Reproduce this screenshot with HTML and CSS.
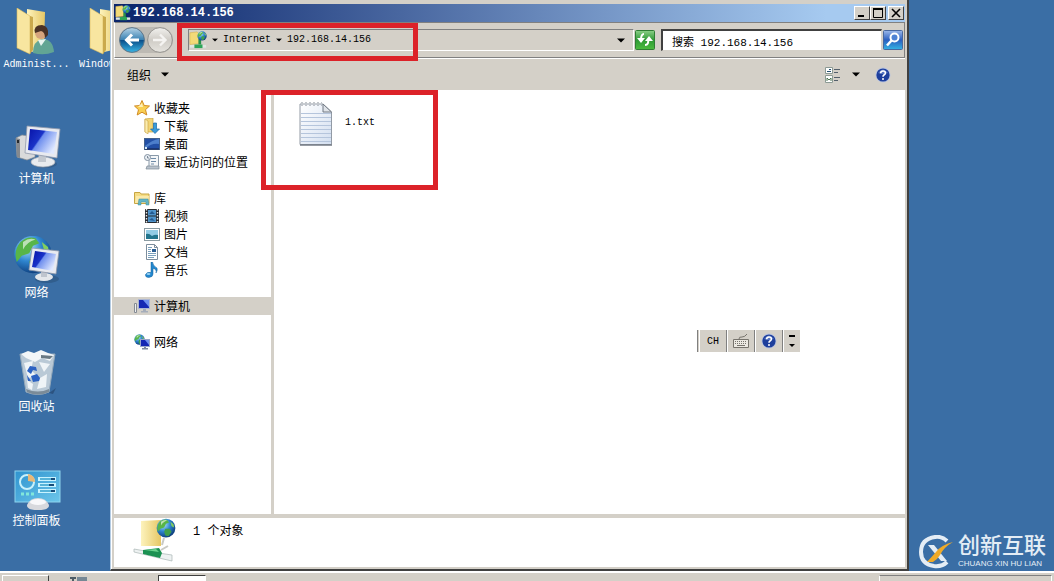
FILE: index.html
```html
<!DOCTYPE html>
<html lang="zh-CN">
  <head>
    <meta charset="UTF-8" />
    <title>192.168.14.156</title>
    <link rel="stylesheet" href="styles.css">
  </head>
  <body>
    <!-- Shared icons -->
    <svg class="sprite" width="0" height="0" aria-hidden="true">
      <defs>
        <linearGradient id="gFolder" x1="0" x2="1">
          <stop offset="0" stop-color="#fdf3bd" />
          <stop offset="1" stop-color="#e6c765" />
        </linearGradient>
        <linearGradient id="gScreen" x1="0" x2="1" y2="0.6">
          <stop offset="0" stop-color="#0712a8" />
          <stop offset="0.45" stop-color="#1a33c8" />
          <stop offset="0.5" stop-color="#6f8fee" />
          <stop offset="1" stop-color="#dfe8ff" />
        </linearGradient>
        <radialGradient id="gGlobe" cx="0.35" cy="0.3" r="0.75">
          <stop offset="0" stop-color="#b8ecff" />
          <stop offset="0.5" stop-color="#2f86d0" />
          <stop offset="1" stop-color="#0c3a78" />
        </radialGradient>
        <linearGradient id="gBack" x2="0" y2="1">
          <stop offset="0" stop-color="#b5d3e6" />
          <stop offset="0.48" stop-color="#3d84b4" />
          <stop offset="0.52" stop-color="#0b4f8a" />
          <stop offset="1" stop-color="#38b6e6" />
        </linearGradient>
        <linearGradient id="gForward" x2="0" y2="1">
          <stop offset="0" stop-color="#f2f1ee" />
          <stop offset="0.5" stop-color="#cfccc6" />
          <stop offset="1" stop-color="#e6e4df" />
        </linearGradient>
        <linearGradient id="gSearch" x2="0" y2="1">
          <stop offset="0" stop-color="#9db9ea" />
          <stop offset="0.5" stop-color="#2a5fc0" />
          <stop offset="1" stop-color="#35b4e4" />
        </linearGradient>
        <linearGradient id="gGreen" x2="0" y2="1">
          <stop offset="0" stop-color="#8ccf88" />
          <stop offset="0.5" stop-color="#2e9a35" />
          <stop offset="1" stop-color="#4cbc3e" />
        </linearGradient>
        <linearGradient id="gPanel" x2="1" y2="1">
          <stop offset="0" stop-color="#2f93cf" />
          <stop offset="1" stop-color="#6cc6ea" />
        </linearGradient>
        <linearGradient id="gPaper" x2="1" y2="1">
          <stop offset="0" stop-color="#ffffff" />
          <stop offset="1" stop-color="#d3dff0" />
        </linearGradient>
      </defs>

      <symbol id="folder" viewBox="0 0 48 48">
        <path d="M14 1 L32 4 L31 41 L14 45Z" fill="url(#gFolder)" />
        <path d="M4 0 L17 8 L17 46 L4 40Z" fill="#f8e6a0" stroke="#d9b95c" stroke-width="0.6" />
        <path d="M17 8 L20 9 L20 42 L17 46Z" fill="#caa94c" />
      </symbol>

      <symbol id="monitor" viewBox="0 0 48 48">
        <path d="M3 16 L9 13 L22 15 L22 35 L14 38 L4 35Z" fill="#d9dadb" stroke="#8b8f94" stroke-width="0.7" />
        <path d="M3 16 L7 17 L7 36 L4 35Z" fill="#85898e" />
        <path d="M4 18 H6 V21 H4Z" fill="#26292d" />
        <ellipse cx="32" cy="42" rx="12" ry="4" fill="#31557f" opacity="0.6" />
        <ellipse cx="30" cy="40" rx="12" ry="5" fill="#e9ebee" stroke="#a5abb3" stroke-width="0.7" />
        <path d="M26 31 L33 32 L33 40 L25 40Z" fill="#c3c8cf" />
        <path d="M14 4 L47 7 L44 36 L12 31Z" fill="#e8eaf0" stroke="#9099ab" stroke-width="0.8" />
        <path d="M17 7 L44 10 L41 32 L15 28Z" fill="url(#gScreen)" />
      </symbol>

      <symbol id="globe" viewBox="0 0 32 32">
        <circle cx="16" cy="16" r="15" fill="url(#gGlobe)" />
        <path d="M6 6 Q12 1 18 3 L21 7 L16 9 L13 15 L7 17 L3 22 Q0 13 6 6Z" fill="#58b548" />
        <path d="M15 17 L22 17 L25 22 L20 29 L15 28 L13 22Z" fill="#3f9f4a" />
        <path d="M23 6 L28 10 L29 15 L25 13Z" fill="#83cf5d" />
        <path d="M8 6 Q13 2 18 4 Q11 6 8 12Z" fill="#ffffff" opacity="0.6" />
      </symbol>

      <!-- FTP place: folder, globe and network cable -->
      <symbol id="ftp" viewBox="0 0 44 44">
        <path d="M8 3 L28 2 L28 28 L8 28Z" fill="url(#gFolder)" />
        <path d="M31 20 L29 27 M35 28 L28 32" stroke="#c9cac5" stroke-width="2" />
        <use href="#globe" x="23" y="0" width="20" height="20" />
        <path d="M1 31 L12 33 L39 37 L39 43 L26 40 L1 34Z" fill="#eef2f2" stroke="#a9b6b4" stroke-width="0.7" />
        <path d="M10 32 L26 30 L29 35 L27 40 L10 36Z" fill="#1c9152" />
        <path d="M12 32 L23 31 L26 34Z" fill="#6bd38e" />
      </symbol>

      <symbol id="ftp-small" viewBox="0 0 20 20">
        <path d="M1 2 L9 1 L11 3 L11 14 L1 15Z" fill="#f3da77" stroke="#d6af48" stroke-width="0.6" />
        <path d="M12 9 L12 15" stroke="#28934b" stroke-width="3" />
        <use href="#globe" x="9" y="0" width="11" height="11" />
        <path d="M1 17 H19" stroke="#dfe7e2" stroke-width="3" />
        <path d="M6 17 H15" stroke="#2fa558" stroke-width="4" />
      </symbol>

      <symbol id="caret" viewBox="0 0 8 5">
        <path d="M0 0.5 H8 L4 4.5Z" fill="#000000" />
      </symbol>

      <symbol id="help" viewBox="0 0 16 16">
        <circle cx="8" cy="8" r="7.5" fill="#b9c4df" />
        <circle cx="8" cy="8" r="6.6" fill="#1e3f9c" />
        <path d="M3 6 Q8 -1 13 6 Q8 8 3 6Z" fill="#7f9bdc" opacity="0.6" />
        <path d="M5.6 6.3 Q5.7 4 8 4 Q10.4 4 10.4 6 Q10.4 7.2 9 8 Q8 8.6 8 9.8" fill="none" stroke="#ffffff" stroke-width="1.6" />
        <circle cx="8" cy="12" r="1" fill="#ffffff" />
      </symbol>
    </svg>

    <main class="desktop">
      <!-- Desktop shortcuts -->
      <div class="shortcuts">
        <button class="shortcut">
          <svg class="shortcut-icon" viewBox="0 0 48 48">
            <use href="#folder" width="48" height="48" />
            <path d="M20 45 Q20 33 29 31 Q40 31 41 44 Q31 48 20 45Z" fill="#62a594" />
            <path d="M25 32 L28 38 L33 31Z" fill="#e9f4f0" />
            <circle cx="28" cy="25" r="6" fill="#d6a47c" />
            <path d="M22 25 Q20 17 29 17 Q36 18 35 27 L32 30 Q32 24 28 23Z" fill="#4a3225" />
          </svg>
          <span class="shortcut-label">Administ...</span>
        </button>
        <button class="shortcut">
          <svg class="shortcut-icon" viewBox="0 0 48 48"><use href="#folder" x="-2" width="48" height="48" /></svg>
          <span class="shortcut-label">Windows ...</span>
        </button>
        <button class="shortcut">
          <svg class="shortcut-icon" viewBox="0 0 48 48"><use href="#monitor" width="48" height="48" /></svg>
          <span class="shortcut-label cjk">计算机</span>
        </button>
        <button class="shortcut">
          <svg class="shortcut-icon" viewBox="0 0 48 48">
            <use href="#globe" x="0" y="-2" width="40" height="41" />
            <ellipse cx="34" cy="43" rx="12" ry="4" fill="#284d76" opacity="0.5" />
            <ellipse cx="31" cy="41" rx="9" ry="4" fill="#e4e7eb" />
            <path d="M28 34 H34 V41 H28Z" fill="#bfc5ce" />
            <path d="M19 12 L46 15 L43 38 L16 34Z" fill="#e8eaf0" stroke="#8e97a8" stroke-width="0.8" />
            <path d="M22 15 L43 18 L40 35 L19 31Z" fill="url(#gScreen)" />
          </svg>
          <span class="shortcut-label cjk">网络</span>
        </button>
        <button class="shortcut">
          <svg class="shortcut-icon" viewBox="0 0 48 48">
            <path d="M36 43 L43 38 L40 44Z" fill="#2c5380" />
            <path d="M7 4 L42 4 L36 42 Q25 47 13 42Z" fill="#b9c9d6" stroke="#93a8ba" stroke-width="1" />
            <path d="M8 4 L15 1 L21 3 L28 0 L35 3 L41 5 L37 11 L29 8 L22 12 L13 8Z" fill="#f2f6f8" />
            <path d="M28 5 L40 6 L37 9 L28 8Z" fill="#697983" />
            <path d="M11 13 L20 11 L18 20 L24 26 L15 28Z M26 12 L37 14 L31 22Z M27 28 L34 24 L33 37 L24 39Z M14 30 L20 34 L19 40 L15 38Z" fill="#eff4f7" />
            <path d="M13 39 Q25 44 36 39 L36 42 Q25 47 14 42Z" fill="#7b8b98" />
            <path d="M14 21 L17 16 L23 17 L24 21 L20 20 L18 24Z M18 26 L24 24 L27 28 L26 31 L20 32Z M14 25 L18 31 L15 31Z" fill="#2c62c2" />
          </svg>
          <span class="shortcut-label cjk">回收站</span>
        </button>
        <button class="shortcut">
          <svg class="shortcut-icon" viewBox="0 0 48 48">
            <rect x="2" y="7" width="45" height="31" fill="url(#gPanel)" stroke="#8ed4ee" />
            <circle cx="14" cy="18" r="7" fill="none" stroke="#c9f1fb" stroke-width="2" />
            <path d="M15 17 V10 Q22 11 22 18Z" fill="#e8b878" />
            <path d="M25 15 H43 M25 21 H43 M25 27 H43" stroke="#c8f3ff" stroke-width="4" />
            <path d="M27 15 H38 M27 21 H36 M27 27 H38" stroke="#56b3d8" stroke-width="2" />
            <path d="M38 15 H42 M36 21 H41 M38 27 H42" stroke="#174c79" stroke-width="2" />
            <path d="M8 30 H11 M13 30 H16 M18 30 H21" stroke="#81e7da" stroke-width="3" />
            <path d="M14 41 Q17 34 25 34 Q33 34 36 41 Q37 46 25 46 Q13 46 14 41Z" fill="#d8d9dd" />
            <ellipse cx="25" cy="38" rx="8" ry="3" fill="#f8f8fa" />
          </svg>
          <span class="shortcut-label cjk">控制面板</span>
        </button>
      </div>

      <!-- Explorer window -->
      <section class="window">
        <header class="titlebar">
          <svg class="title-icon" viewBox="0 0 20 20"><use href="#ftp-small" width="20" height="20" /></svg>
          <h1 class="title">192.168.14.156</h1>
          <button class="win-btn" aria-label="最小化"><svg viewBox="0 0 10 10"><path d="M1 8 H7" stroke="#000" stroke-width="2" /></svg></button>
          <button class="win-btn" aria-label="最大化"><svg viewBox="0 0 10 10"><path d="M0.5 1 V9.5 H9.5 V1" fill="none" stroke="#000" /><path d="M0 1 H10" stroke="#000" stroke-width="2" /></svg></button>
          <button class="win-btn win-close" aria-label="关闭"><svg viewBox="0 0 10 10"><path d="M1 1 L9 9 M9 1 L1 9" stroke="#000" stroke-width="1.6" /></svg></button>
        </header>

        <nav class="navbar">
          <div class="history">
            <button class="round-btn" aria-label="后退">
              <svg viewBox="0 0 26 26">
                <circle cx="13" cy="13" r="12.4" fill="url(#gBack)" stroke="#5c7488" />
                <path d="M20 13 H8 M13 7.5 L7.5 13 L13 18.5" fill="none" stroke="#fff" stroke-width="3" />
              </svg>
            </button>
            <button class="round-btn" aria-label="前进">
              <svg viewBox="0 0 26 26">
                <circle cx="13" cy="13" r="12.4" fill="url(#gForward)" stroke="#94928e" />
                <path d="M6 13 H18 M13 7.5 L18.5 13 L13 18.5" fill="none" stroke="#f5f4f2" stroke-width="2.4" />
              </svg>
            </button>
          </div>
          <div class="address">
            <svg class="address-icon" viewBox="0 0 20 20"><use href="#ftp-small" width="20" height="20" /></svg>
            <svg class="caret-small" viewBox="0 0 8 5"><use href="#caret" width="8" height="5" /></svg>
            <a class="crumb" href="#">Internet</a>
            <svg class="caret-small" viewBox="0 0 8 5"><use href="#caret" width="8" height="5" /></svg>
            <a class="crumb" href="#">192.168.14.156</a>
            <button class="address-drop" aria-label="以前的位置"><svg class="caret" viewBox="0 0 8 5"><use href="#caret" width="8" height="5" /></svg></button>
          </div>
          <button class="square-btn" aria-label="刷新">
            <svg viewBox="0 0 20 20">
              <rect x="0.5" y="0.5" width="19" height="19" rx="1" fill="url(#gGreen)" stroke="#2f7d33" />
              <path d="M9 4 Q6 4 6 10 M13 9 Q14 15 10 15" fill="none" stroke="#fff" stroke-width="2" />
              <path d="M2 8 H10 L6 13Z M10 11 H18 L14 6Z" fill="#fff" />
            </svg>
          </button>
          <input class="search" type="text" aria-label="搜索" value="搜索 192.168.14.156">
          <button class="square-btn search-btn" aria-label="开始搜索">
            <svg viewBox="0 0 20 20">
              <rect x="0.5" y="0.5" width="19" height="19" rx="1" fill="url(#gSearch)" stroke="#48689f" />
              <circle cx="11.5" cy="7.5" r="4" fill="#4f83d4" stroke="#fff" stroke-width="2" />
              <path d="M8.5 10.5 L4 15.5" stroke="#fff" stroke-width="2.6" />
            </svg>
          </button>
        </nav>

        <div class="toolbar">
          <button class="tool cjk">组织 <svg class="caret" viewBox="0 0 8 5"><use href="#caret" width="8" height="5" /></svg></button>
          <div class="tool-end">
            <button class="tool" aria-label="更改视图">
              <svg class="view-icon" viewBox="0 0 16 16">
                <path d="M0.5 0.5 H7.5 V6.5 H0.5Z M0.5 8.5 H7.5 V15.5 H0.5Z" fill="#fff" stroke="#8c9a94" />
                <path d="M2 4.5 H6 M4 2.5 H6" stroke="#24506e" />
                <path d="M2 14 V11 L4 13 L6 11 V14" fill="none" stroke="#4d7550" />
                <path d="M9 2.5 H15 M9 5.5 H13 M9 10.5 H15 M9 13.5 H13" stroke="#54606c" />
              </svg>
              <svg class="caret" viewBox="0 0 8 5"><use href="#caret" width="8" height="5" /></svg>
            </button>
            <button class="tool" aria-label="帮助"><svg class="icon" viewBox="0 0 16 16"><use href="#help" width="16" height="16" /></svg></button>
          </div>
        </div>

        <div class="panes">
          <aside class="sidebar">
            <ul class="tree">
              <li>
                <a class="node" href="#">
                  <svg class="icon" viewBox="0 0 16 16"><path d="M8 0.5 L10.2 5.5 L15.5 6 L11.5 9.7 L12.8 15 L8 12.2 L3.2 15 L4.5 9.7 L0.5 6 L5.8 5.5Z" fill="#f9cf52" stroke="#d18b25" /><path d="M8 3 L9 7 L4 7Z" fill="#fff0b5" /></svg>
                  收藏夹
                </a>
                <ul>
                  <li><a class="node" href="#">
                    <svg class="icon" viewBox="0 0 16 16"><path d="M1 1 L9 0 L9 14 L1 14Z" fill="#f2d576" stroke="#c9a33f" stroke-width="0.7" /><path d="M1 1 L4 3 V16 L1 14Z" fill="#fbedaf" stroke="#c9a33f" stroke-width="0.6" /><path d="M9.5 5 H12.5 V11 H15.5 L11 15.5 L6.5 11 H9.5Z" fill="#3a9bd8" stroke="#1869a7" stroke-width="0.7" /></svg>
                    下载</a></li>
                  <li><a class="node" href="#">
                    <svg class="icon" viewBox="0 0 16 16"><rect x="0.5" y="2.5" width="15" height="11" fill="#224fa5" stroke="#45628d" /><path d="M1 10 Q8 4 15 3 V8 Q7 7 1 13Z" fill="#6094dc" opacity="0.7" /><path d="M1 13 H15" stroke="#101f48" /><path d="M1 11 H3 V13 H1Z" fill="#d7ebfa" /></svg>
                    桌面</a></li>
                  <li><a class="node" href="#">
                    <svg class="icon" viewBox="0 0 16 16"><path d="M5 1.5 H14.5 V12.5 H5Z" fill="#f4f6f8" stroke="#8999a9" /><path d="M7 4.5 H12 M7 7.5 H12 M7 10 H10" stroke="#6f8ba7" /><circle cx="3.5" cy="3.5" r="3" fill="#e8eef3" stroke="#8290a0" /><path d="M3.5 2 V4 H5" fill="none" stroke="#536375" stroke-width="0.7" /><path d="M3 12 H15 V15 H2Z" fill="#b9c2cc" stroke="#7c8996" stroke-width="0.7" /></svg>
                    最近访问的位置</a></li>
                </ul>
              </li>
              <li>
                <a class="node" href="#">
                  <svg class="icon" viewBox="0 0 16 16"><path d="M0.5 2.5 H6 L7 4 H15 V13.5 H0.5Z" fill="#f5dc83" stroke="#c7a542" /><path d="M2 6 H15 L14 13 H1Z" fill="#fae9a9" /><path d="M4 15 L5 9 H14 L15 15 H12 V12 H7 V15Z" fill="#63b4c5" stroke="#3b8c9c" stroke-width="0.5" /></svg>
                  库
                </a>
                <ul>
                  <li><a class="node" href="#">
                    <svg class="icon" viewBox="0 0 16 16"><rect x="1" y="1" width="14" height="14" fill="#272c32" /><path d="M4 2 H12 V7.5 H4Z M4 8.5 H12 V14 H4Z" fill="#4f93ca" /><path d="M5 6 L8 3 L11 6Z M5 12 L8 10 L11 13Z" fill="#235a91" /><path d="M2.5 1 V15 M13.5 1 V15" stroke="#e8e8e8" stroke-width="1.4" stroke-dasharray="1.5 1.5" /></svg>
                    视频</a></li>
                  <li><a class="node" href="#">
                    <svg class="icon" viewBox="0 0 16 16"><rect x="0.5" y="2.5" width="15" height="12" fill="#fff" stroke="#8a9ba2" /><rect x="2" y="4" width="12" height="9" fill="#93cce5" /><path d="M2 8 Q5 7 8 10 Q11 8 14 9 V13 H2Z" fill="#23768e" /></svg>
                    图片</a></li>
                  <li><a class="node" href="#">
                    <svg class="icon" viewBox="0 0 16 16"><path d="M2.5 0.5 H10.5 L13.5 3.5 V15.5 H2.5Z" fill="#fff" stroke="#7c8d9c" /><path d="M10.5 0.5 V3.5 H13.5" fill="none" stroke="#7c8d9c" /><path d="M4 3.5 H8 M4 5.5 H7 M4 7.5 H7 M4 9.5 H12 M4 11.5 H12 M4 13.5 H10" stroke="#7aa0bd" /><rect x="8" y="5" width="4" height="3" fill="#2a5e94" /></svg>
                    文档</a></li>
                  <li><a class="node" href="#">
                    <svg class="icon" viewBox="0 0 16 16"><path d="M7 0 H8.5 Q9 4 13 6 Q14 8 12 11 Q13 7 9 6.5 V12 Q9 15 5 15.5 Q1 15.5 1.5 12.5 Q3 9.5 7 10.5Z" fill="#2287ce" stroke="#15619b" stroke-width="0.5" /><ellipse cx="4.5" cy="12" rx="2" ry="1" fill="#97d1f2" /></svg>
                    音乐</a></li>
                </ul>
              </li>
              <li>
                <a class="node node-active" href="#">
                  <svg class="icon" viewBox="0 0 16 16"><path d="M0.5 5.5 H2.5 V14.5 H0.5Z" fill="#eee" stroke="#858b94" /><rect x="4.5" y="1.5" width="11" height="9" fill="#1527b4" stroke="#abb5d2" /><path d="M9 2 H15 V9Z" fill="#6f8fee" /><path d="M9 11 H12 V13 H14 V14.5 H7 V13 H9Z" fill="#a5adba" /></svg>
                  计算机
                </a>
              </li>
              <li>
                <a class="node" href="#">
                  <svg class="icon" viewBox="0 0 16 16"><use href="#globe" width="11" height="11" /><rect x="6.5" y="5.5" width="9" height="7" fill="#1527b4" stroke="#9aa6cb" /><path d="M11 6 H15 V11Z" fill="#6f8fee" /><path d="M10 13 H12 V14 H14 V15.5 H8 V14 H10Z" fill="#7e89a0" /></svg>
                  网络
                </a>
              </li>
            </ul>
          </aside>
          <div class="files">
            <a class="file" href="#">
              <svg class="file-icon" viewBox="0 0 34 46">
                <path d="M1 3 H24 L32.5 11 V43.5 H1Z" fill="url(#gPaper)" stroke="#929aa5" />
                <path d="M2 12.5 H32 M2 16.5 H32 M2 20.5 H32 M2 24.5 H32 M2 28.5 H32 M2 32.5 H32 M2 36.5 H32 M2 40.5 H32" stroke="#b5c5dc" />
                <path d="M24 3 V11 H32.5Z" fill="#dfe3e8" stroke="#737b85" />
                <path d="M2 3 H23" stroke="#858d98" stroke-width="3" stroke-dasharray="2 2" />
                <path d="M2 3 H23" stroke="#fff" stroke-dasharray="2 2" />
                <path d="M1 44 H33" stroke="#747b86" stroke-width="1.5" />
              </svg>
              <span>1.txt</span>
            </a>
          </div>
        </div>

        <footer class="details">
          <svg class="details-icon" viewBox="0 0 44 44"><use href="#ftp" width="44" height="44" /></svg>
          <p class="details-text">1 个对象</p>
        </footer>
      </section>

      <!-- Red highlight frames over the window -->
      <div class="mark mark-address"></div>
      <div class="mark mark-file"></div>

      <!-- Floating language bar -->
      <div class="langbar">
        <button class="lang-btn">CH</button>
        <button class="lang-btn" aria-label="键盘">
          <svg class="icon" viewBox="0 0 16 16"><path d="M0.5 6.5 H15.5 V14.5 H0.5Z" fill="#ece9e2" stroke="#77746d" /><path d="M2 8.5 H14 M2 10.5 H14" stroke="#77746d" stroke-dasharray="1 1" /><path d="M4 12.5 H12" stroke="#77746d" /><path d="M6 6 Q6 3.5 9 4 Q12 4 14 1" fill="none" stroke="#77746d" /></svg>
        </button>
        <button class="lang-btn" aria-label="帮助"><svg class="icon" viewBox="0 0 16 16"><use href="#help" width="16" height="16" /></svg></button>
        <button class="lang-btn lang-more" aria-label="选项"><svg viewBox="0 0 8 16"><path d="M1 3 H7" stroke="#000" stroke-width="2" /><path d="M1 11 H7 L4 14Z" /></svg></button>
      </div>

      <!-- Logo -->
      <div class="brand">
        <svg class="brand-logo" viewBox="0 0 34 34">
          <path d="M28 6 Q23 1 16 2 Q2 4 2 17 Q2 29 15 31 Q23 32 28 27" fill="none" stroke="#e4edf5" stroke-width="4" />
          <path d="M9 10 H15 L28 26 H22Z" fill="#e4edf5" />
          <path d="M34 7 Q22 10 17 17 L8 27 H14 Q18 25 21 20 Q25 12 34 7Z" fill="#efaa28" />
        </svg>
        <div class="brand-text">
          <span class="brand-name">创新互联</span>
          <span class="brand-sub">CHUANG XIN HU LIAN</span>
        </div>
      </div>
    </main>

    <footer class="taskbar">
      <button class="start" aria-label="开始"></button>
      <svg class="quick" viewBox="0 0 20 8"><path d="M1 3 H7 M4 3 V8" stroke="#4d5c66" stroke-width="2" /><path d="M8 2 H18 V8 H8Z" fill="#768895" /></svg>
      <button class="task" aria-label="192.168.14.156"></button>
      <div class="tray"></div>
    </footer>
  </body>
</html>
```
FILE: styles.css
```css
* {
  box-sizing: border-box;
}

body {
  display: flex;
  flex-direction: column;
  height: 100vh;
  margin: 0;
  overflow: hidden;
  background: #3a6ea5;
  color: #000000;
  font-family: "Liberation Mono", "Noto Sans CJK SC", monospace;
  font-size: 10px;
}

button,
input {
  margin: 0;
  padding: 0;
  border: 0;
  background: none;
  color: inherit;
  font: inherit;
}

a {
  color: inherit;
  text-decoration: none;
}

ul {
  margin: 0;
  padding: 0;
  list-style: none;
}

svg {
  display: block;
  flex: none;
}

.sprite {
  position: absolute;
}

.icon {
  width: 16px;
  height: 16px;
}

.caret {
  width: 8px;
  height: 5px;
}

.caret-small {
  width: 6px;
  height: 4px;
}

.desktop {
  position: relative;
  flex: 1;
  min-height: 0;
}

/* Desktop shortcuts */
.shortcuts {
  display: grid;
  grid-template-columns: 73px 78px;
  grid-auto-rows: 114px;
  justify-content: start;
}

.shortcut {
  grid-column: 1;
  display: flex;
  flex-direction: column;
  align-items: center;
  padding-top: 8px;
  color: #ffffff;
}

.shortcut:nth-child(2) {
  grid-column: 2;
}

.shortcut-icon {
  width: 48px;
  height: 48px;
}

.shortcut-label {
  line-height: 18px;
  white-space: nowrap;
}

.cjk {
  font-size: 12px;
}

.shortcut-label.cjk {
  line-height: 20px;
}

/* Explorer window */
.window {
  position: absolute;
  top: 0;
  bottom: 0;
  left: 110px;
  right: 145px;
  display: flex;
  flex-direction: column;
  padding: 4px 2px 2px 3px;
  border: solid;
  border-width: 0 2px 2px 1px;
  border-color: #d4d0c8 #404040 #404040 #b4cbe2;
  background: #d4d0c8;
  box-shadow: inset 1px 0 #ffffff;
}

.titlebar {
  display: flex;
  align-items: center;
  height: 18px;
  padding: 0 1px;
  background: linear-gradient(to right, #0a246a, #a6caf0 90%);
  color: #ffffff;
}

.title-icon {
  width: 16px;
  height: 16px;
}

.title {
  flex: 1;
  margin: 0 0 0 2px;
  font-size: 12px;
}

.win-btn {
  display: grid;
  place-items: center;
  width: 16px;
  height: 14px;
  border: 1px solid;
  border-color: #ffffff #404040 #404040 #ffffff;
  background: #d4d0c8;
}

.win-btn svg {
  width: 10px;
  height: 10px;
}

.win-close {
  margin-left: 2px;
}

/* Navigation row */
.navbar {
  display: flex;
  align-items: center;
  height: 36px;
  padding-left: 4px;
  border: 1px solid #808080;
  border-left-color: #ffffff;
}

.history {
  display: flex;
  gap: 2px;
  margin-right: 15px;
  border-radius: 13px;
  background: #bdbab4;
}

.round-btn,
.round-btn svg {
  width: 26px;
  height: 26px;
}

.address {
  display: flex;
  flex: 1;
  align-items: center;
  gap: 5px;
  height: 22px;
  padding-right: 8px;
  border: 1px solid;
  border-color: #808080 #ffffff #ffffff #808080;
}

.address-icon {
  width: 18px;
  height: 18px;
}

.crumb {
  line-height: 16px;
}

.address-drop {
  margin-left: auto;
}

.square-btn,
.square-btn svg {
  width: 20px;
  height: 20px;
}

.square-btn {
  margin: 0 1px;
}

.search {
  width: 221px;
  height: 22px;
  margin-left: 5px;
  padding: 0 9px;
  border: solid;
  border-width: 2px 1px 1px 2px;
  border-color: #404040 #d4d0c8 #d4d0c8 #404040;
  background: #ffffff;
  font-size: 11px;
}

/* Command row */
.toolbar {
  display: flex;
  align-items: center;
  justify-content: space-between;
  height: 32px;
  padding: 0 14px 0 13px;
  border-top: 1px solid #ffffff;
}

.tool {
  display: flex;
  align-items: center;
  gap: 10px;
}

.tool-end {
  display: flex;
  gap: 15px;
}

.view-icon {
  width: 18px;
  height: 16px;
}

/* Folder tree and file list */
.panes {
  display: flex;
  flex: 1;
  min-height: 0;
  background: #ffffff;
}

.sidebar {
  width: 160px;
  padding-top: 9px;
  border-right: 3px solid #d4d0c8;
  font-size: 12px;
}

.tree > li {
  margin-bottom: 18px;
}

.node {
  display: flex;
  align-items: center;
  gap: 4px;
  height: 18px;
  padding-left: 20px;
  white-space: nowrap;
}

.tree ul .node {
  padding-left: 30px;
}

.node-active {
  background: #d4d0c8;
}

.files {
  flex: 1;
  padding: 11px 25px;
}

.file {
  display: inline-flex;
  gap: 12px;
  line-height: 44px;
}

.file-icon {
  width: 34px;
  height: 46px;
}

/* Details pane */
.details {
  display: flex;
  gap: 16px;
  height: 53px;
  padding-left: 19px;
  border-top: 4px solid #d4d0c8;
  background: #ffffff;
}

.details-icon {
  width: 44px;
  height: 44px;
}

.details-text {
  margin: 4px 0;
  font-size: 12px;
  line-height: 20px;
}

/* Highlight frames */
.mark {
  position: absolute;
  border: 5px solid #dc2229;
  pointer-events: none;
}

.mark-address {
  top: 23px;
  left: 177px;
  width: 241px;
  height: 38px;
}

.mark-file {
  top: 90px;
  left: 261px;
  width: 177px;
  height: 100px;
}

/* Language bar */
.langbar {
  position: absolute;
  top: 330px;
  left: 697px;
  display: flex;
  height: 22px;
  padding-left: 1px;
  border-left: 1px solid #808080;
  background: #d4d0c8;
}

.lang-btn {
  display: grid;
  place-items: center;
  width: 28px;
  border-right: 1px solid #808080;
  border-left: 1px solid #ffffff;
}

.lang-more {
  width: 17px;
  border-right: 0;
}

.lang-more svg {
  width: 8px;
  height: 16px;
}

/* Logo */
.brand {
  position: absolute;
  right: 8px;
  bottom: 2px;
  display: flex;
  align-items: center;
  gap: 5px;
  color: #e4edf5;
}

.brand-logo {
  width: 34px;
  height: 34px;
}

.brand-text {
  display: flex;
  flex-direction: column;
  width: 88px;
}

.brand-name {
  font-size: 22px;
  font-weight: 500;
  line-height: 24px;
}

.brand-sub {
  font-family: "Liberation Sans", sans-serif;
  font-size: 8px;
  line-height: 8px;
  white-space: nowrap;
}

/* Taskbar */
.taskbar {
  display: flex;
  height: 10px;
  padding: 2px 2px 0;
  border-top: 2px solid #ffffff;
  background: #d4d0c8;
}

.start {
  width: 47px;
  border: solid;
  border-width: 1px 1px 0;
  border-color: #ffffff #404040 #404040 #ffffff;
}

.quick {
  width: 20px;
  height: 8px;
  margin-left: 20px;
}

.task {
  width: 48px;
  margin-left: 69px;
  border: solid;
  border-width: 1px 1px 0;
  border-color: #404040 #ffffff #ffffff #404040;
  background: #ffffff;
}

.tray {
  width: 173px;
  margin-left: auto;
  border: 1px solid;
  border-color: #808080 #ffffff;
  border-bottom: 0;
}
```
